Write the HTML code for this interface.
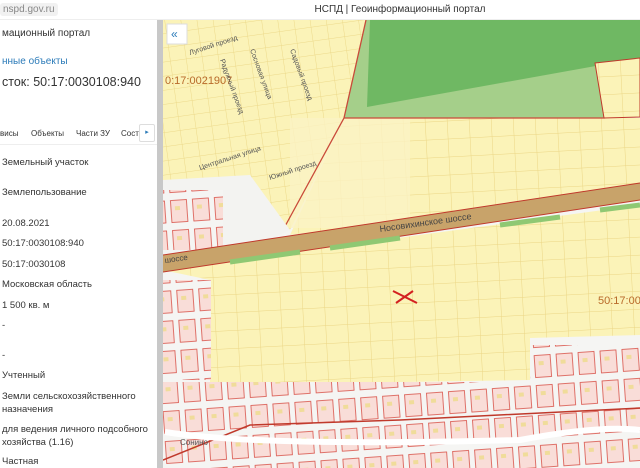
<!DOCTYPE html>
<html><head><meta charset="utf-8"><style>
*{margin:0;padding:0;box-sizing:border-box}
body{width:640px;height:468px;overflow:hidden;background:#fff;font-family:"Liberation Sans",sans-serif;position:relative;color:#333}
.top{position:absolute;left:0;top:0;width:640px;height:20px;background:#fff;border-bottom:1px solid #eee}
.url{position:absolute;left:0;top:3px;font-size:10px;color:#888;background:#f1f1f1;padding:1px 3px;border-radius:3px}
.title{position:absolute;left:0;width:640px;top:4px;text-align:center;font-size:10px;color:#333;padding-left:160px}
.panel{position:absolute;left:0;top:20px;width:157px;height:448px;background:#fff;overflow:hidden;font-size:9.5px}
.panel div{position:absolute;left:2px;white-space:nowrap}
.sb{position:absolute;left:157px;top:20px;width:6px;height:448px;background:#c8c8c8}
.map{position:absolute;left:163px;top:20px}
</style></head><body>
<div class="top"><span class="url">nspd.gov.ru</span><div class="title">НСПД | Геоинформационный портал</div></div>
<div class="panel">
<div style="top:8px;font-size:10px">мационный портал</div>
<div style="top:36px;color:#2a7ab8;font-size:10px">нные объекты</div>
<div style="top:55px;font-size:12.5px;color:#333">сток: 50:17:0030108:940</div>
<div style="top:109px;left:0;font-size:8px">висы</div>
<div style="top:109px;left:31px;font-size:8px">Объекты</div>
<div style="top:109px;left:76px;font-size:8px">Части ЗУ</div>
<div style="top:109px;left:121px;font-size:8px">Состав</div>
<div style="top:104px;left:139px;width:16px;height:18px;border:1px solid #ddd;background:#fff;border-radius:2px;font-size:7px;color:#2a7ab8;text-align:center;line-height:16px">▸</div>
<div style="top:124px;left:0;width:157px;height:1px;background:#eee"></div>
<div style="top:137px">Земельный участок</div>
<div style="top:167px">Землепользование</div>
<div style="top:198px">20.08.2021</div>
<div style="top:218px">50:17:0030108:940</div>
<div style="top:239px">50:17:0030108</div>
<div style="top:259px">Московская область</div>
<div style="top:280px">1 500 кв. м</div>
<div style="top:300px">-</div>
<div style="top:330px">-</div>
<div style="top:350px">Учтенный</div>
<div style="top:370px;line-height:13px">Земли сельскохозяйственного<br>назначения</div>
<div style="top:403px;line-height:13px">для ведения личного подсобного<br>хозяйства (1.16)</div>
<div style="top:436px">Частная</div>
</div>
<div class="sb"></div>
<svg class="map" width="477" height="448" viewBox="163 20 477 448" xmlns="http://www.w3.org/2000/svg">
<defs>
<pattern id="g" width="16" height="14" patternUnits="userSpaceOnUse" patternTransform="rotate(-8)"><rect width="16" height="14" fill="#fbf3b8"/><path d="M0 0H16M0 0V14" stroke="#ecd98a" stroke-width="1"/></pattern>
<pattern id="g2" width="22" height="18" patternUnits="userSpaceOnUse" patternTransform="rotate(-3)"><rect width="22" height="18" fill="#fbf3b8"/><path d="M0 0H22M0 0V18" stroke="#ebd685" stroke-width="1"/></pattern>
<pattern id="h" width="22" height="30" patternUnits="userSpaceOnUse" patternTransform="rotate(-4)"><rect width="22" height="30" fill="#f5f5f3"/><rect x="2" y="2" width="16" height="22" fill="#f9ddd8" stroke="#d9534a" stroke-width="0.8"/><rect x="6" y="8" width="5" height="4" fill="#f0dc9a"/></pattern>
</defs>
<rect x="163" y="20" width="477" height="448" fill="#f5f5f3"/>
<polygon points="163,20 366,20 344,118 290,230 163,255" fill="url(#g)"/>
<polygon points="344,118 640,118 640,190 290,235" fill="url(#g2)"/>
<rect x="290" y="118" width="120" height="110" fill="#fbf3c4" opacity="0.8"/>
<polygon points="366,20 605,20 605,118 344,118" fill="#a5cf8a"/>
<polygon points="370,20 640,20 640,58 367,107" fill="#6fb863"/>
<polygon points="595,63 640,58 640,117 604,118" fill="url(#g2)" stroke="#c0392b"/>
<path d="M366,20 L344,118 L283,230 M344,118 L605,118" stroke="#c94a3a" stroke-width="1.3" fill="none"/>
<polygon points="163,180 250,175 290,230 250,250 163,258" fill="#f3f3f1"/>
<rect x="163" y="190" width="60" height="60" fill="url(#h)"/>
<polygon points="163,270 640,205 640,335 530,338 530,380 210,385 210,280" fill="url(#g2)"/>
<polygon points="163,255 640,183 640,200 163,272" fill="#c8a36a"/>
<path d="M163,255 L640,183 M163,272 L640,200" stroke="#c0392b" stroke-width="1"/>
<path d="M330,248 L400,238 M500,225 L560,217 M600,210 L640,205 M230,262 L300,252" stroke="#8fc873" stroke-width="5"/>
<text x="380" y="232" font-size="9" fill="#444" transform="rotate(-8 380 232)">Носовихинское шоссе</text>
<text x="165" y="263" font-size="8" fill="#444" transform="rotate(-8 165 263)">шоссе</text>
<rect x="163" y="280" width="48" height="100" fill="url(#h)"/>
<rect x="163" y="382" width="477" height="86" fill="url(#h)"/>
<rect x="530" y="345" width="110" height="40" fill="url(#h)"/>
<path d="M163,460 L250,425 L400,420 L640,408" stroke="#c0392b" stroke-width="1.5" fill="none"/>
<path d="M165,432 Q260,447 520,440 Q600,425 640,430" stroke="#fff" stroke-width="6" fill="none"/>
<text x="165" y="84" font-size="11" fill="#b86a2a">0:17:0021907</text>
<text x="598" y="304" font-size="11" fill="#b86a2a">50:17:00</text>
<text x="180" y="445" font-size="8" fill="#555">Сонино</text>
<g font-size="7" fill="#555">
<text x="190" y="55" transform="rotate(-18 190 55)">Луговой проезд</text>
<text x="200" y="170" transform="rotate(-18 200 170)">Центральная улица</text>
<text x="270" y="180" transform="rotate(-18 270 180)">Южный проезд</text>
<text x="220" y="60" transform="rotate(70 220 60)">Радужный проезд</text>
<text x="250" y="50" transform="rotate(70 250 50)">Сосновая улица</text>
<text x="290" y="50" transform="rotate(70 290 50)">Садовый проезд</text>
</g>
<path d="M393,291 L417,303 M396,303 L413,291" stroke="#d32020" stroke-width="2"/>
<rect x="167" y="24" width="20" height="20" fill="#fff" stroke="#ddd"/>
<text x="171" y="38" font-size="12" fill="#2a7ab8">«</text>
</svg>
</body></html>
